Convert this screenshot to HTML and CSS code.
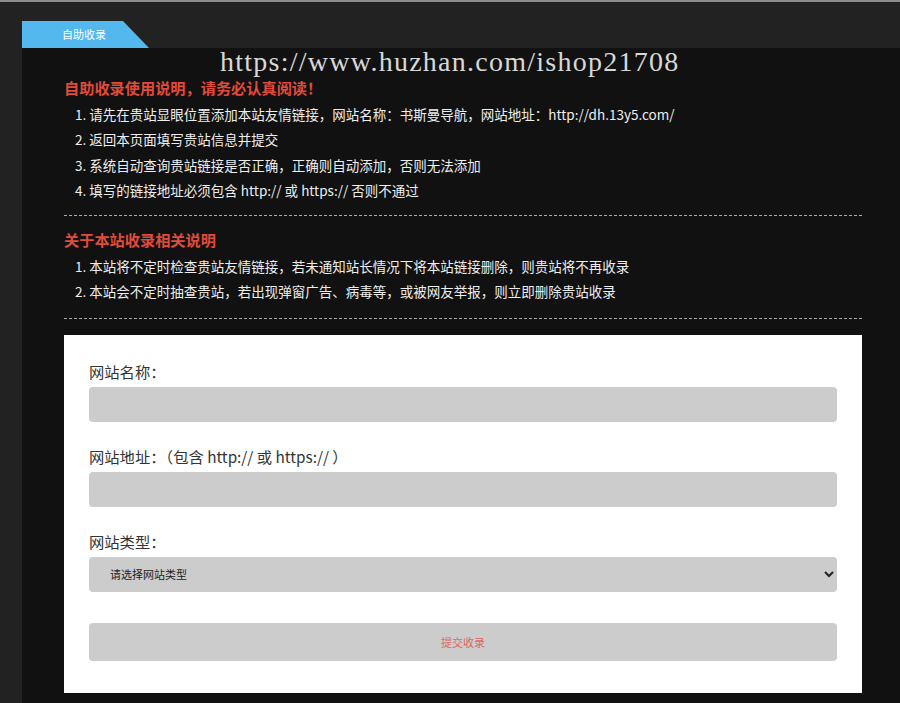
FILE: index.html
```html
<!DOCTYPE html>
<html lang="zh-CN">
<head>
  <meta charset="UTF-8" />
  <meta name="viewport" content="width=device-width, initial-scale=1.0"/>
  <title>自助收录</title>
  <link rel="stylesheet" href="styles.css">
</head>
<body>
  <div class="tabs">
    <div class="tab">自助收录</div>
  </div>

  <div class="panel">
    <div class="notice">
      <h3>自助收录使用说明，请务必认真阅读！</h3>
      <ol>
        <li>请先在贵站显眼位置添加本站友情链接，网站名称：书斯曼导航，网站地址：http://dh.13y5.com/</li>
        <li>返回本页面填写贵站信息并提交</li>
        <li>系统自动查询贵站链接是否正确，正确则自动添加，否则无法添加</li>
        <li>填写的链接地址必须包含 http:// 或 https:// 否则不通过</li>
      </ol>
    </div>

    <div class="notice">
      <h3>关于本站收录相关说明</h3>
      <ol>
        <li>本站将不定时检查贵站友情链接，若未通知站长情况下将本站链接删除，则贵站将不再收录</li>
        <li>本站会不定时抽查贵站，若出现弹窗广告、病毒等，或被网友举报，则立即删除贵站收录</li>
      </ol>
    </div>

    <form class="submit-form">
      <div class="field">
        <label for="site-name">网站名称：</label>
        <input type="text" id="site-name">
      </div>
      <div class="field">
        <label for="site-url">网站地址：（包含 http:// 或 https:// ）</label>
        <input type="text" id="site-url">
      </div>
      <div class="field">
        <label for="site-type">网站类型：</label>
        <select id="site-type">
          <option>请选择网站类型</option>
        </select>
      </div>
      <button type="button" class="submit-btn">提交收录</button>
    </form>
  </div>

  <div class="watermark">https://www.huzhan.com/ishop21708</div>
</body>
</html>
```

FILE: styles.css
```css
:root {
  --bg: #222222;
  --panel: #111111;
  --tab: #52b8ee;
  --red: #e14b3b;
  --text: #eeeeee;
  --field: #cccccc;
}

* {
  box-sizing: border-box;
  margin: 0;
  padding: 0;
}

html, body {
  overflow: hidden;
}

body {
  font-family: 'Noto Sans CJK SC', 'Noto Sans', sans-serif;
  background-color: var(--bg);
  border-top: 2px solid #8c8c8c;
  padding: 19px 0 0 22px;
  width: 904px;
  height: 703px;
  position: relative;
}

.tabs {
  display: flex;
  height: 27px;
}

.tab {
  width: 127px;
  background-color: var(--tab);
  color: #fff;
  font-size: 11px;
  line-height: 27px;
  padding-left: 40px;
  clip-path: polygon(0 0, 101px 0, 127px 100%, 0 100%);
}

.panel {
  background-color: var(--panel);
  padding: 24px 42px 10px;
  min-height: 660px;
}

.notice {
  padding-bottom: 12px;
  border-bottom: 1px dashed #aaa;
}

.notice + .notice {
  margin-top: 8px;
}

.notice h3 {
  color: var(--red);
  font-size: 15.2px;
  font-weight: 700;
  line-height: 30px;
}

.notice ol {
  list-style: decimal inside;
  padding-left: 11px;
  color: var(--text);
  font-size: 13.5px;
  line-height: 25.3px;
}

.notice + .notice ol {
  padding-bottom: 1px;
}

.submit-form {
  margin-top: 16px;
  background-color: #fff;
  padding: 24px 25px 32px;
}

.field {
  margin-bottom: 22px;
}

.field label {
  display: block;
  color: #333;
  font-size: 15.3px;
  line-height: 24px;
  margin-bottom: 4px;
}

.field input,
.field select {
  display: block;
  width: 100%;
  height: 35px;
  border: none;
  border-radius: 4px;
  background-color: var(--field);
  outline: none;
  font-family: inherit;
}

.field select {
  font-size: 11px;
  color: #222;
  padding: 0 5px 0 17px;
}

.submit-btn {
  display: block;
  width: 100%;
  height: 38px;
  margin-top: 31px;
  border: none;
  border-radius: 4px;
  background-color: var(--field);
  color: #e0665e;
  font-family: inherit;
  font-size: 11px;
  cursor: pointer;
}

.watermark {
  position: absolute;
  left: 220px;
  top: 46px;
  font-family: 'Liberation Serif', serif;
  font-size: 28px;
  line-height: 28px;
  letter-spacing: 1.25px;
  color: #d8d8d8;
  white-space: nowrap;
  pointer-events: none;
}
```
